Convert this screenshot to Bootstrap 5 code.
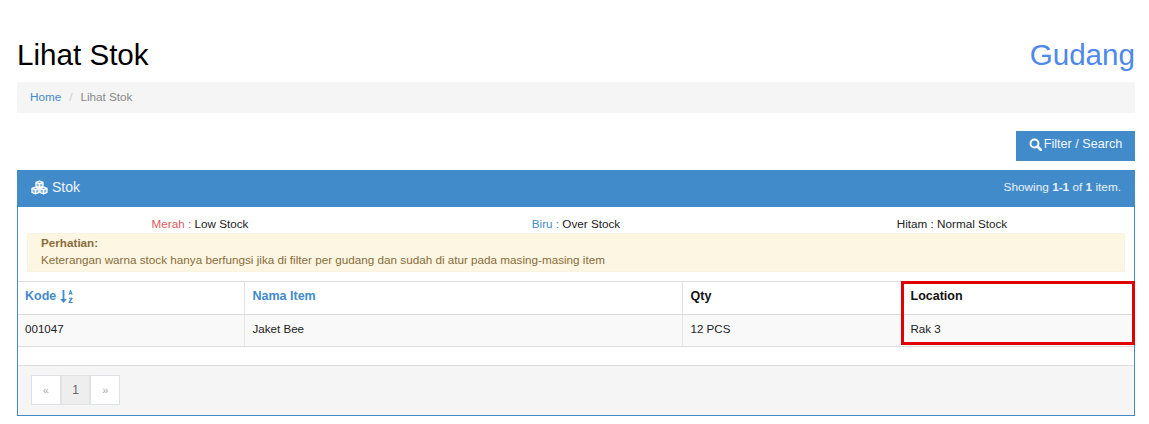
<!DOCTYPE html>
<html lang="id">
<head>
<meta charset="utf-8">
<title>Lihat Stok</title>
<link href="https://cdn.jsdelivr.net/npm/bootstrap@5.3.0/dist/css/bootstrap.min.css" rel="stylesheet">
<style>
html,body{height:424px;overflow:hidden}
body{font-family:"Liberation Sans",Arial,sans-serif;font-size:11.7px;color:#222;background:#fff}
.page-wrap{padding:36px 14px 0 17px}
.title-row{height:37px;margin-bottom:9px}
.title-main,.title-side{font-size:29.6px;line-height:36px;margin:0;font-weight:400}
.title-main{color:#000}
.title-side{color:#4d88ea}
.crumbs{background:#f5f5f5;height:31px;padding:0 13px 2px;margin:0;font-size:11.7px;--bs-breadcrumb-divider-color:#ccc;--bs-breadcrumb-item-active-color:#888;--bs-breadcrumb-item-padding-x:8px;align-items:center}
.crumbs a{color:#428bca;text-decoration:none}
.tool-row{padding:18px 0 9px}
.filter-btn{background:#428bca;color:#f4f8fc;border:0;border-radius:0;width:119px;height:30px;padding:0 0 3px;font-size:12.6px;display:flex;align-items:center;justify-content:center;gap:2px}
.stock-panel{border:1px solid #428bca;border-radius:0;height:246px;--bs-card-bg:#fff}
.panel-head{background:#428bca;color:#fff;border:0;border-radius:0!important;height:35px;margin:-1px -1px 0;padding:0 14px 2px;box-sizing:content-box}
.panel-head-inner{height:35px}
.panel-name{font-size:14px;color:#eef4fb}
.panel-count{font-size:11.8px;color:#e8f1f9}
.panel-body{padding:10px 9px 0}
.legend-row{--bs-gutter-x:30px;height:16px;line-height:14px;margin-top:0;text-align:center;color:#222}
.txt-red{color:#e05a5a}
.txt-blue{color:#428bca}
.notice{background:#fcf6e3;color:#8a6d3b;border:1px solid #faf3df;border-radius:0;padding:0 13px;margin:0;height:39px;line-height:17px}
.grid-wrap{position:relative;margin-top:9px}
.stock-table{margin:0;font-size:11.6px;--bs-table-color:#222;border-top:1px solid #ddd;table-layout:fixed}
.stock-table th,.stock-table td{padding:0 8px;vertical-align:middle;border-bottom:1px solid #ddd;border-left:1px solid #e4e4e4}
.stock-table th:first-child,.stock-table td:first-child{border-left:0;padding-left:7px}
.stock-table th{height:33px;font-weight:700;color:#111;font-size:12.5px;padding-bottom:3px}
.stock-table td{height:32px;background:#f9f9f9;padding-bottom:4px}
.stock-table th a{color:#428bca;text-decoration:none}
.hilite{position:absolute;left:883px;top:0;width:234px;height:64px;border:3px solid #e00000;pointer-events:none}
.panel-foot{position:absolute;left:0;right:0;bottom:0;height:50px;background:#f5f5f5;border-top:1px solid #ddd;padding:9px 13px}
.pager{margin:0;--bs-pagination-padding-x:0;--bs-pagination-padding-y:0;--bs-pagination-font-size:12px;--bs-pagination-border-color:#e3e3e3;--bs-pagination-border-radius:0;--bs-pagination-active-color:#666;--bs-pagination-active-bg:#eee;--bs-pagination-active-border-color:#e3e3e3}
.pager .page-link{width:29.7px;height:30px;line-height:28px;text-align:center;background:#fff;color:#aaa;font-size:11px}
.pager .page-item+.page-item .page-link{margin-left:0}
.pager .page-item.active .page-link{background:#eee;color:#666;border-color:#e3e3e3;font-size:12px}
.pager .page-item:first-child .page-link,.pager .page-item:last-child .page-link{border-radius:0}
svg.ico{display:inline-block;flex:none}
</style>
</head>
<body>
<div class="page-wrap">
  <div class="d-flex justify-content-between align-items-center title-row">
    <h1 class="title-main">Lihat Stok</h1>
    <h2 class="title-side">Gudang</h2>
  </div>
  <nav aria-label="breadcrumb">
    <ol class="breadcrumb crumbs">
      <li class="breadcrumb-item"><a href="#">Home</a></li>
      <li class="breadcrumb-item active" aria-current="page">Lihat Stok</li>
    </ol>
  </nav>
  <div class="d-flex justify-content-end tool-row">
    <button type="button" class="btn filter-btn">
      <svg class="ico" width="13" height="13" viewBox="0 0 13 13" fill="none" stroke="#fff"><circle cx="5.5" cy="5.5" r="4" stroke-width="2"/><path d="M8.5 8.5 L12 12" stroke-width="2.6" stroke-linecap="round"/></svg>
      <span>Filter / Search</span>
    </button>
  </div>
  <div class="card stock-panel position-relative">
    <div class="card-header panel-head">
      <div class="d-flex justify-content-between align-items-center panel-head-inner">
        <div class="d-flex align-items-center gap-1 panel-name">
          <svg class="ico" width="17" height="15" viewBox="0 0 17 15" fill="none" stroke="#fff" stroke-width="1.3" stroke-linejoin="round"><path d="M8.5 1 L12 2.4 V6.2 L8.5 7.6 L5 6.2 V2.4 Z" fill="#fff" fill-opacity=".35"/><path d="M5 2.4 L8.5 3.8 L12 2.4 M8.5 3.8 V7.6"/><path d="M4.5 7 L8 8.4 V12.4 L4.5 13.8 L1 12.4 V8.4 Z" fill="#fff" fill-opacity=".35"/><path d="M1 8.4 L4.5 9.8 L8 8.4 M4.5 9.8 V13.8"/><path d="M12.5 7 L16 8.4 V12.4 L12.5 13.8 L9 12.4 V8.4 Z" fill="#fff" fill-opacity=".35"/><path d="M9 8.4 L12.5 9.8 L16 8.4 M12.5 9.8 V13.8"/></svg>
          <span>Stok</span>
        </div>
        <div class="panel-count">Showing <b>1-1</b> of <b>1</b> item.</div>
      </div>
    </div>
    <div class="panel-body">
      <div class="row legend-row">
        <div class="col-4"><span class="txt-red">Merah :</span> Low Stock</div>
        <div class="col-4"><span class="txt-blue">Biru :</span> Over Stock</div>
        <div class="col-4">Hitam : Normal Stock</div>
      </div>
      <div class="alert notice" role="alert">
        <b>Perhatian:</b><br>
        Keterangan warna stock hanya berfungsi jika di filter per gudang dan sudah di atur pada masing-masing item
      </div>
    </div>
    <div class="grid-wrap">
      <table class="table stock-table">
        <colgroup><col style="width:226px"><col style="width:438px"><col style="width:220px"><col></colgroup>
        <thead>
          <tr>
            <th><a href="#" class="d-inline-flex align-items-center gap-1">Kode
              <svg class="ico" width="13" height="15" viewBox="0 0 13 15" fill="#428bca"><path d="M2.6 1 H4.4 V10 H6.8 L3.5 14 L0.2 10 H2.6 Z"/><path d="M8.5 5.8 L10.2 1 H11 L12.7 5.8 H11.6 L11.3 4.9 H9.9 L9.6 5.8 Z M10.2 4 H11 L10.6 2.8 Z"/><path d="M8.8 8.8 H12.5 V9.7 L10.3 13 H12.6 V14 H8.5 V13.1 L10.8 9.8 H8.8 Z"/></svg></a></th>
            <th><a href="#">Nama Item</a></th>
            <th>Qty</th>
            <th>Location</th>
          </tr>
        </thead>
        <tbody>
          <tr>
            <td>001047</td>
            <td>Jaket Bee</td>
            <td>12 PCS</td>
            <td>Rak 3</td>
          </tr>
        </tbody>
      </table>
      <div class="hilite"></div>
    </div>
    <div class="panel-foot">
      <nav aria-label="pagination">
        <ul class="pagination pager">
          <li class="page-item disabled"><a class="page-link" href="#">«</a></li>
          <li class="page-item active"><a class="page-link" href="#">1</a></li>
          <li class="page-item disabled"><a class="page-link" href="#">»</a></li>
        </ul>
      </nav>
    </div>
  </div>
</div>
<script src="https://cdn.jsdelivr.net/npm/bootstrap@5.3.0/dist/js/bootstrap.bundle.min.js"></script>
</body>
</html>
